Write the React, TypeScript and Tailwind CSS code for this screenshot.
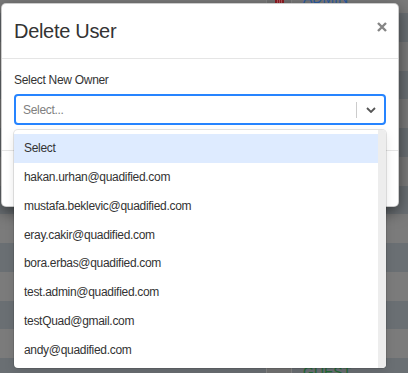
import React from 'react';

const owners = [
  'Select',
  'hakan.urhan@quadified.com',
  'mustafa.beklevic@quadified.com',
  'eray.cakir@quadified.com',
  'bora.erbas@quadified.com',
  'test.admin@quadified.com',
  'testQuad@gmail.com',
  'andy@quadified.com',
];

function TrashButton() {
  return (
    <div className="flex h-full w-[26px] justify-center border-x border-[#858585] bg-[#737373]">
      <svg width="9" height="12" viewBox="0 0 9 12" className="self-end">
        <rect x="0" y="0" width="9" height="12" fill="#8e1d24" />
        <rect x="2" y="2" width="1" height="10" fill="#b8545a" />
        <rect x="4" y="2" width="1" height="10" fill="#b8545a" />
        <rect x="6" y="2" width="1" height="10" fill="#b8545a" />
      </svg>
    </div>
  );
}

function BackgroundTable() {
  const rows = Array.from({ length: 12 }, (_, i) => i);
  return (
    <div className="flex flex-col">
      <div className="flex h-[13px] items-start bg-[#7b7b7b] pl-[266px]">
        <div className="h-[5px]">
          <TrashButton />
        </div>
        <div className="ml-[11px] -mt-[10px] text-[14px] leading-[16px] text-[#2c5ea6]">ADMIN</div>
      </div>
      {rows.map((i) => (
        <div key={i} className={i % 2 === 0 ? 'h-[28.75px] bg-[#6a6f73]' : 'h-[28.75px] bg-[#7b7b7b]'} />
      ))}
      <div className="flex h-[29px] items-start bg-[#6a6f73] pl-[266px]">
        <div className="mt-[8px] h-[21px]">
          <TrashButton />
        </div>
        <div className="ml-[11px] pt-[6px] text-[14px] leading-[16px] text-[#1f6a33]">GUEST</div>
      </div>
    </div>
  );
}

function OwnerSelect() {
  return (
    <div className="relative">
      <div className="flex h-[31px] items-center rounded-[4px] border-2 border-[#2684ff] bg-white">
        <span className="flex-1 pl-[7px] text-[12px] tracking-[-0.3px] text-[#808080]">Select...</span>
        <span className="h-[16px] w-px bg-[#cccccc]" />
        <span className="flex w-[27px] justify-center pl-[1px]">
          <svg width="10" height="6" viewBox="0 0 10 6" fill="none">
            <polyline points="1,1 5,5 9,1" stroke="#555" strokeWidth="1.8" />
          </svg>
        </span>
      </div>
      <div className="absolute left-0 top-[36px] z-10 flex h-[238px] w-full overflow-hidden rounded-[4px] bg-white shadow-[0_0_0_1px_rgba(0,0,0,0.1),0_4px_11px_rgba(0,0,0,0.1)]">
        <div className="flex-1 overflow-hidden pt-[4px]">
          {owners.map((o, i) => (
            <div
              key={o}
              className={
                i === 0
                  ? 'flex h-[28.75px] items-center bg-[#deebff] pl-[10px] text-[12px] tracking-[-0.3px] text-[#333]'
                  : 'flex h-[28.75px] items-center pl-[10px] text-[12px] tracking-[-0.3px] text-[#333]'
              }
            >
              {o}
            </div>
          ))}
        </div>
        <div className="w-[8px] bg-[#ededed]" />
      </div>
    </div>
  );
}

export default function App() {
  return (
    <div className="relative h-[373px] w-[408px] overflow-hidden bg-[#7b7b7b] font-['Liberation_Sans',Arial,sans-serif]">
      <BackgroundTable />
      <div className="absolute left-[1px] top-[3px] w-[398px] rounded-[5px] border border-black/20 bg-white shadow-[0_5px_15px_rgba(0,0,0,0.5)]">
        <div className="flex h-[55px] items-center justify-between border-b border-[#e5e5e5] pl-[12px] pr-[11px]">
          <h4 className="text-[20px] tracking-[-0.3px] text-[#333]">Delete User</h4>
          <button className="mb-[8px]">
            <svg width="10" height="10" viewBox="0 0 10 10">
              <path d="M1 1 L9 9 M9 1 L1 9" stroke="#858585" strokeWidth="2.4" />
            </svg>
          </button>
        </div>
        <div className="px-[12px] pb-[25px] pt-[14px]">
          <label className="mb-[7px] block text-[12px] leading-[14px] tracking-[-0.3px] text-[#333]">Select New Owner</label>
          <OwnerSelect />
        </div>
        <div className="flex h-[56px] items-center justify-end gap-[6px] border-t border-[#e5e5e5] px-[14px]">
          <button className="rounded-[4px] border border-[#ccc] px-[12px] py-[6px] text-[13px] text-[#333]">Cancel</button>
          <button className="rounded-[4px] bg-[#d9534f] px-[12px] py-[6px] text-[13px] text-white">Delete</button>
        </div>
      </div>
    </div>
  );
}
